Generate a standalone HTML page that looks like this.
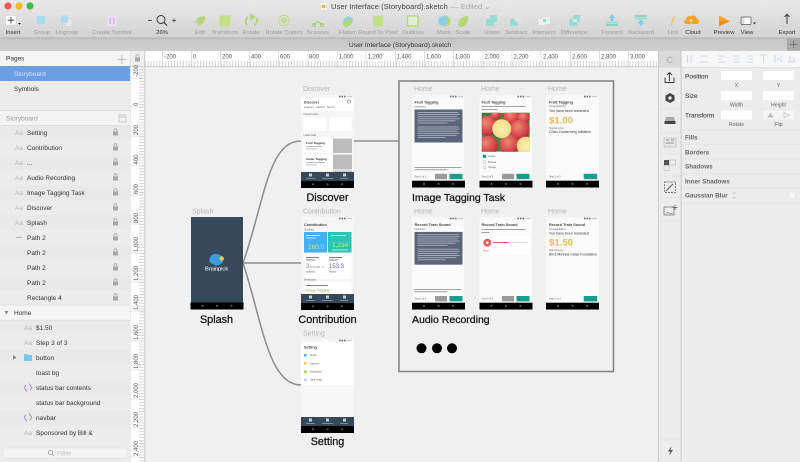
<!DOCTYPE html>
<html><head><meta charset="utf-8"><title>User Interface (Storyboard).sketch</title>
<style>
html,body{margin:0;padding:0;background:#f0f0f0;width:800px;height:462px;overflow:hidden}
svg{display:block;font-family:"Liberation Sans",sans-serif}
.tb{font-size:5.9px;text-anchor:middle;fill:#9a9a9a}
.tb2{font-size:5.9px;text-anchor:middle;fill:#333}
.rl{font-size:6px;fill:#555}
.row{font-size:6.5px;fill:#333}
.aa{font-size:6.5px;fill:#b5b5b5}
.lab{font-size:7px;fill:#b5b5b5}
.big{font-size:10.800px;fill:#111;stroke:#111;stroke-width:.25px}
.ttl{font-size:3.8px;font-weight:bold;fill:#444}
.tiny{font-size:2.4px;fill:#666}
.ins{font-size:6.3px;font-weight:bold;fill:#666}
.insr{font-size:6.5px;fill:#444;stroke:#444;stroke-width:.12px}
.ins0{font-size:5.2px;fill:#666;text-anchor:middle}
</style></head><body>
<svg width="800" height="462" viewBox="0 0 800 462" xmlns="http://www.w3.org/2000/svg">
<defs>
<linearGradient id="tbg" x1="0" y1="0" x2="0" y2="1"><stop offset="0" stop-color="#e9e9e9"/><stop offset="1" stop-color="#d2d2d2"/></linearGradient>
<linearGradient id="tab" x1="0" y1="0" x2="0" y2="1"><stop offset="0" stop-color="#c2c2c2"/><stop offset="1" stop-color="#cfcfcf"/></linearGradient>
<radialGradient id="app1" cx=".4" cy=".35" r=".7"><stop offset="0" stop-color="#ee8a70"/><stop offset=".7" stop-color="#d5404a"/><stop offset="1" stop-color="#a8253a"/></radialGradient>
<radialGradient id="app2" cx=".5" cy=".5" r=".6"><stop offset="0" stop-color="#fbf0b0"/><stop offset=".8" stop-color="#f2dd8a"/><stop offset="1" stop-color="#c94a40"/></radialGradient>
<pattern id="ticksH" x="162.4" y="0" width="2.92" height="6" patternUnits="userSpaceOnUse"><rect width=".7" height="6" fill="#c4c4c4"/></pattern>
<pattern id="ticksV" x="0" y="78" width="6" height="2.92" patternUnits="userSpaceOnUse"><rect width="6" height=".7" fill="#c4c4c4"/></pattern>
<symbol id="lock" viewBox="0 0 7 8" width="7" height="8"><rect x="1" y="3.5" width="5" height="4" fill="#a8a8a8"/><path d="M2 3.5V2.2a1.5 1.5 0 0 1 3 0V3.5" fill="none" stroke="#a8a8a8" stroke-width=".8"/></symbol>
<symbol id="nav" viewBox="0 0 53 7" width="53" height="7"><rect width="53" height="7" fill="#000"/><circle cx="12" cy="3.3" r="1.1" fill="#556"/><circle cx="26.5" cy="3.3" r="1.1" fill="#556"/><circle cx="41" cy="3.3" r="1.1" fill="#556"/></symbol>
<symbol id="status" viewBox="0 0 53 3" width="53" height="3"><rect width="53" height="3" fill="#f6f6f6"/><rect x="38" y=".7" width="1.5" height="1.6" fill="#666"/><rect x="40.5" y=".7" width="1.5" height="1.6" fill="#666"/><rect x="43" y=".7" width="1.5" height="1.6" fill="#666"/><rect x="46" y=".9" width="5" height="1.2" fill="#ccc"/></symbol>
<symbol id="tabs" viewBox="0 0 53 9" width="53" height="9"><rect width="53" height="9" fill="#35495a"/><rect x="8" y="1.5" width="3" height="3" fill="#c7ced4"/><rect x="25" y="1.5" width="3" height="3" fill="#c7ced4"/><rect x="42" y="1.5" width="3" height="3" fill="#c7ced4"/><rect x="5" y="6" width="9" height=".8" fill="#8d9aa5"/><rect x="21" y="6" width="11" height=".8" fill="#8d9aa5"/><rect x="39" y="6" width="8" height=".8" fill="#8d9aa5"/></symbol>
<symbol id="loremBox" viewBox="0 0 48 33" width="48" height="33"><rect width="48" height="33" fill="#5a657b"/><g fill="#aab1bf"><rect x="3" y="2.5" width="41" height=".9"/><rect x="3" y="4.6" width="42" height=".9"/><rect x="3" y="6.7" width="40" height=".9"/><rect x="3" y="8.8" width="42" height=".9"/><rect x="3" y="10.9" width="38" height=".9"/><rect x="3" y="13" width="30" height=".9"/><rect x="3" y="17" width="41" height=".9"/><rect x="3" y="19.1" width="42" height=".9"/><rect x="3" y="21.2" width="40" height=".9"/><rect x="3" y="23.3" width="42" height=".9"/><rect x="3" y="25.4" width="39" height=".9"/><rect x="3" y="27.5" width="28" height=".9"/></g></symbol>
</defs>

<!-- canvas -->
<rect width="800" height="462" fill="#f0f0f0"/>

<!-- toolbar -->
<rect width="800" height="38" fill="url(#tbg)"/>
<rect y="38" width="800" height="13" fill="url(#tab)"/>
<rect y="37.5" width="800" height=".8" fill="#b0b0b0"/>
<rect x="787" y="38.5" width="13" height="12" fill="#a9a9a9"/>
<path d="M793.5 41v7M790 44.500h7" stroke="#777" stroke-width=".9"/>
<circle cx="8" cy="6" r="3.6" fill="#ec5b55"/><circle cx="19" cy="6" r="3.6" fill="#f4b62f"/><circle cx="30" cy="6" r="3.6" fill="#3cc04a"/>
<rect x="320.500" y="2.500" width="6" height="7.500" fill="#fff" stroke="#ccc" stroke-width=".4"/><circle cx="323.500" cy="6.500" r="2" fill="#f0b030"/>
<text x="331" y="9" font-size="7.650" fill="#444">User Interface (Storyboard).sketch</text>
<text x="451" y="9" font-size="7.650" fill="#aaa">— Edited ⌄</text>
<text x="400" y="47" font-size="6.700" fill="#333" text-anchor="middle">User Interface (Storyboard).sketch</text>

<!-- toolbar icons -->
<rect x="6" y="15.500" width="10" height="9.500" rx="1" fill="#fff" stroke="#ccc" stroke-width=".4"/><path d="M11 17v6.500M7.700 20.200h6.600" stroke="#333" stroke-width=".8"/><path d="M18 23h3l-1.500 1.800z" fill="#222"/>
<rect x="39" y="18" width="8" height="8" fill="#ddd"/><rect x="37" y="16" width="8" height="8" fill="#a9dcf0"/>
<rect x="65" y="19" width="7" height="7" fill="#e8e8e8" stroke="#ccc" stroke-width=".4"/><rect x="61" y="15.500" width="7" height="7" fill="#a9dcf0"/>
<rect x="107" y="16" width="10" height="10" rx="1" fill="#ece0f2"/><path d="M110 18v6M114 18v6" stroke="#c49ad8" stroke-width="1"/>
<path d="M148 20.500h4M172 20.500h4M174 18.500v4" stroke="#555" stroke-width=".9"/>
<circle cx="161" cy="19.500" r="4" fill="none" stroke="#333" stroke-width=".9"/><path d="M164 22.500l3 3" stroke="#333" stroke-width="1.200"/>
<path d="M195 24c0-6 6-8 10-8 1 5-3 10-8 10z" fill="#b4d679"/><circle cx="196.500" cy="24" r="1.600" fill="#d8d8d8"/>
<rect x="219.500" y="15.500" width="11" height="11" fill="#c1e088"/>
<path d="M248 17a5.500 5.500 0 0 0-1 8M254 25a5.500 5.500 0 0 0 3-7M251 15l3 2-3 2z" fill="none" stroke="#b4d679" stroke-width="2"/>
<circle cx="284" cy="20.500" r="3" fill="#c1e088"/><circle cx="284" cy="20.500" r="5.200" fill="none" stroke="#b4d679" stroke-width="1.200" stroke-dasharray="1.500 1"/>
<path d="M314 25l4-4 4 4" fill="none" stroke="#a7c96e" stroke-width=".9"/><circle cx="314" cy="25" r="1.500" fill="none" stroke="#a7c96e"/><circle cx="322" cy="25" r="1.500" fill="none" stroke="#a7c96e"/>
<rect x="343" y="17" width="10" height="8" rx="4" transform="rotate(-35 348 21)" fill="#8fd4d8"/><rect x="343" y="20" width="9" height="6" rx="3" transform="rotate(-35 348 23)" fill="#b4d679"/>
<rect x="373" y="15.500" width="10" height="11" fill="#c1e088"/>
<rect x="407.500" y="16" width="10.500" height="10" fill="#e4eed2" stroke="#b4d679" stroke-width="1.300"/>
<circle cx="445" cy="21" r="5.500" fill="#b4d679"/><circle cx="443" cy="21" r="5" fill="#8fd0e8"/>
<path d="M458 25c0-6 5-9 10-9 1 5-2 11-7 11-2 0-3-1-3-2z" fill="#b4d679"/>
<path d="M486 19h4v-4h7v7h-3v4h-8z" fill="#96dcd2"/>
<rect x="515" y="15.500" width="6" height="6" fill="#e3e3e3"/><path d="M510 19h5v2.500h2.500V26h-7.500z" fill="#96dcd2"/>
<rect x="543" y="17" width="7" height="7" fill="#eee"/><rect x="538.500" y="19" width="7" height="6" fill="#eee"/><rect x="543" y="19" width="3" height="3" fill="#96dcd2"/>
<path d="M569 19h4v-4h7v7h-3v4h-8z" fill="#96dcd2"/><rect x="573" y="19" width="4" height="3" fill="#e3e3e3"/>
<path d="M612 14l3 4h-1.500v3h-3v-3H609z" fill="#87ccdd"/><rect x="606" y="21.500" width="12" height="2" fill="#96dcd2"/><rect x="606" y="24" width="12" height="2" fill="#8ed2c8"/>
<rect x="635" y="15" width="12" height="2" fill="#8ed2c8"/><rect x="635" y="17.500" width="12" height="2" fill="#96dcd2"/><path d="M641 26l-3-4h1.500v-2h3v2h1.500z" fill="#87ccdd"/>
<path d="M671 25l3.500-9" stroke="#eec46e" stroke-width="1.300"/>
<path d="M686 24c-2 0-2.500-4 0-4.500 0-3 3-4 4.500-3 2-2 6-1 6 2 3 0 3.500 5.500.5 5.500z" fill="#f2a324"/><path d="M691 24v-4M689.500 21l1.500-1.500 1.500 1.500" stroke="#fff" stroke-width=".6" fill="none"/>
<path d="M719 15.500l11 5.500-11 5.500z" fill="#f6a623"/><path d="M719 21l11 0-11 5.500z" fill="#ef8a1e"/>
<rect x="741" y="17" width="10" height="7.500" rx="1" fill="#fff" stroke="#555" stroke-width=".7"/><rect x="741.500" y="17.500" width="3" height="6.500" fill="#ddd"/><path d="M753 22.500h3l-1.500 1.800z" fill="#222"/>
<path d="M787 24v-9.500M784.500 17l2.500-2.800 2.500 2.800" fill="none" stroke="#222" stroke-width=".9"/><path d="M782.500 20v6h9v-6" fill="none" stroke="#ccc" stroke-width=".5"/>

<!-- toolbar labels -->
<text class="tb2" x="13" y="34">Insert</text>
<text class="tb" x="42" y="34">Group</text><text class="tb" x="67" y="34">Ungroup</text><text class="tb" x="112" y="34">Create Symbol</text>
<text class="tb2" x="162" y="34">26%</text>
<text class="tb" x="200" y="34">Edit</text><text class="tb" x="225" y="34">Transform</text><text class="tb" x="251" y="34">Rotate</text><text class="tb" x="284" y="34">Rotate Copies</text><text class="tb" x="318" y="34">Scissors</text><text class="tb" x="348" y="34">Flatten</text><text class="tb" x="378" y="34">Round To Pixel</text><text class="tb" x="413" y="34">Outlines</text><text class="tb" x="444" y="34">Mask</text><text class="tb" x="463" y="34">Scale</text><text class="tb" x="492" y="34">Union</text><text class="tb" x="516" y="34">Subtract</text><text class="tb" x="544" y="34">Intersect</text><text class="tb" x="574" y="34">Difference</text><text class="tb" x="612" y="34">Forward</text><text class="tb" x="641" y="34">Backward</text><text class="tb" x="673" y="34">Link</text>
<text class="tb2" x="693" y="34">Cloud</text><text class="tb2" x="724" y="34">Preview</text><text class="tb2" x="747" y="34">View</text><text class="tb2" x="787" y="34">Export</text>

<!-- horizontal ruler -->
<rect x="130" y="51" width="528" height="16" fill="#fff"/>
<rect x="130" y="51" width="15" height="16" fill="#eeeeee"/>
<rect x="145" y="61" width="513" height="6" fill="url(#ticksH)"/>
<path d="M162.500 51v16M191.500 51v16M220.500 51v16M249.500 51v16M278.500 51v16M308 51v16M337 51v16M366 51v16M395.500 51v16M424.500 51v16M453.500 51v16M483 51v16M512 51v16M541 51v16M570.500 51v16M599.500 51v16M628.500 51v16" stroke="#ccc" stroke-width=".6"/>
<text class="rl" x="164" y="58.500">-200</text><text class="rl" x="193" y="58.500">0</text><text class="rl" x="222" y="58.500">200</text><text class="rl" x="251" y="58.500">400</text><text class="rl" x="280" y="58.500">600</text><text class="rl" x="309" y="58.500">800</text><text class="rl" x="338.500" y="58.500">1,000</text><text class="rl" x="367.500" y="58.500">1,200</text><text class="rl" x="396.500" y="58.500">1,400</text><text class="rl" x="426" y="58.500">1,600</text><text class="rl" x="455" y="58.500">1,800</text><text class="rl" x="484.500" y="58.500">2,000</text><text class="rl" x="513.500" y="58.500">2,200</text><text class="rl" x="543" y="58.500">2,400</text><text class="rl" x="572" y="58.500">2,600</text><text class="rl" x="601" y="58.500">2,800</text><text class="rl" x="630" y="58.500">3,000</text>
<rect x="130" y="66.500" width="528" height=".6" fill="#bbb"/>

<!-- vertical ruler -->
<rect x="130" y="67" width="15" height="395" fill="#fff"/>
<rect x="139" y="67" width="6" height="395" fill="url(#ticksV)"/>
<path d="M130 78h15M130 107h15M130 136h15M130 165.500h15M130 195h15M130 224h15M130 253h15M130 282h15M130 311h15M130 341h15M130 370h15M130 399h15M130 428h15M130 457h15" stroke="#ccc" stroke-width=".6"/>
<rect x="144.500" y="51" width=".7" height="411" fill="#bbb"/><rect x="129.500" y="51" width=".8" height="411" fill="#bbb"/>
<use href="#lock" x="134" y="54"/>
<text class="rl" transform="translate(138,77) rotate(-90)">-200</text>
<text class="rl" transform="translate(138,106) rotate(-90)">0</text>
<text class="rl" transform="translate(138,135) rotate(-90)">200</text>
<text class="rl" transform="translate(138,164.500) rotate(-90)">400</text>
<text class="rl" transform="translate(138,194) rotate(-90)">600</text>
<text class="rl" transform="translate(138,223) rotate(-90)">800</text>
<text class="rl" transform="translate(138,252) rotate(-90)">1,000</text>
<text class="rl" transform="translate(138,281) rotate(-90)">1,200</text>
<text class="rl" transform="translate(138,310) rotate(-90)">1,400</text>
<text class="rl" transform="translate(138,340) rotate(-90)">1,600</text>
<text class="rl" transform="translate(138,369) rotate(-90)">1,800</text>
<text class="rl" transform="translate(138,398) rotate(-90)">2,000</text>
<text class="rl" transform="translate(138,427) rotate(-90)">2,200</text>
<text class="rl" transform="translate(138,456) rotate(-90)">2,400</text>

<!-- left sidebar -->
<rect x="0" y="51" width="130" height="411" fill="#ececec"/>
<rect x="0" y="51" width="130" height="15" fill="#f5f5f5"/>
<text class="row" x="6" y="60.500">Pages</text>
<path d="M122 55v9M117.500 59.500h9" stroke="#aaa" stroke-width=".8"/>
<rect x="0" y="66" width="130" height="15" fill="#6a9fe6"/>
<text x="14" y="76" font-size="6.500" fill="#d8e6fa">Storyboard</text>
<text class="row" x="14" y="91">Symbols</text>
<rect x="0" y="110.500" width="130" height=".8" fill="#d0d0d0"/>
<rect x="0" y="111" width="130" height="14" fill="#f3f3f3"/>
<text x="6" y="120.500" font-size="6.500" fill="#999">Storyboard</text>
<rect x="119" y="115" width="7" height="7" fill="none" stroke="#aaa" stroke-width=".6"/><path d="M120 117h5" stroke="#aaa" stroke-width=".6"/>
<rect x="0" y="125" width="130" height=".6" fill="#d8d8d8"/>
<rect y="125.500" width="130" height="15" fill="#e9e9e9"/><rect y="155.500" width="130" height="15" fill="#e9e9e9"/><rect y="185.500" width="130" height="15" fill="#e9e9e9"/><rect y="215" width="130" height="15" fill="#e9e9e9"/><rect y="245" width="130" height="15" fill="#e9e9e9"/><rect y="275" width="130" height="15" fill="#e9e9e9"/>
<rect y="320" width="130" height="15" fill="#e9e9e9"/><rect y="350" width="130" height="15" fill="#e9e9e9"/><rect y="380" width="130" height="15" fill="#e9e9e9"/><rect y="410" width="130" height="15" fill="#e9e9e9"/>
<text class="aa" x="15" y="135.200">Aa</text><text class="row" x="27" y="135.200">Setting</text><use href="#lock" x="112" y="128"/>
<text class="aa" x="15" y="150.200">Aa</text><text class="row" x="27" y="150.200">Contribution</text><use href="#lock" x="112" y="143"/>
<text class="aa" x="15" y="165.200">Aa</text><text class="row" x="27" y="165.200">...</text><use href="#lock" x="112" y="158"/>
<text class="aa" x="15" y="180.200">Aa</text><text class="row" x="27" y="180.200">Audio Recording</text><use href="#lock" x="112" y="173"/>
<text class="aa" x="15" y="195.200">Aa</text><text class="row" x="27" y="195.200">Image Tagging Task</text><use href="#lock" x="112" y="188"/>
<text class="aa" x="15" y="210">Aa</text><text class="row" x="27" y="210">Discover</text><use href="#lock" x="112" y="203"/>
<text class="aa" x="15" y="225">Aa</text><text class="row" x="27" y="225">Splash</text><use href="#lock" x="112" y="218"/>
<path d="M16 237.500h6" stroke="#aaa" stroke-width=".8"/><text class="row" x="27" y="240">Path 2</text><use href="#lock" x="112" y="233"/>
<text class="row" x="27" y="255">Path 2</text><use href="#lock" x="112" y="248"/>
<text class="row" x="27" y="270">Path 2</text><use href="#lock" x="112" y="263"/>
<text class="row" x="27" y="285">Path 2</text><use href="#lock" x="112" y="278"/>
<text class="row" x="27" y="300">Rectangle 4</text><use href="#lock" x="112" y="293"/>
<rect y="305" width="130" height="15" fill="#f5f5f5"/><rect y="304.700" width="130" height=".6" fill="#d4d4d4"/><rect y="319.800" width="130" height=".6" fill="#dadada"/>
<path d="M4.500 311h4l-2 3.500z" fill="#888"/>
<text class="row" x="14" y="315">Home</text>
<text class="aa" x="24" y="330">Aa</text><text class="row" x="36" y="330">$1.50</text>
<text class="aa" x="24" y="345">Aa</text><text class="row" x="36" y="345">Step 3 of 3</text>
<path d="M13 355l3.500 2.500-3.500 2.500z" fill="#888"/>
<path d="M24 354h3l1 1h4v6h-8z" fill="#7cc4ee"/><text class="row" x="36" y="360">button</text>
<text class="row" x="36" y="375">toast bg</text>
<path d="M26 385a3 3 0 0 0 0 5l1 1.500M30 390a3 3 0 0 0 0-5l-1-1.500" fill="none" stroke="#a77fd0" stroke-width=".9"/><text class="row" x="36" y="390">status bar contents</text>
<text class="row" x="36" y="405">status bar background</text>
<path d="M26 415a3 3 0 0 0 0 5l1 1.500M30 420a3 3 0 0 0 0-5l-1-1.500" fill="none" stroke="#a77fd0" stroke-width=".9"/><text class="row" x="36" y="420">navbar</text>
<text class="aa" x="24" y="435">Aa</text><text class="row" x="36" y="435">Sponsored by Bill &amp;</text>
<rect y="441" width="130" height="21" fill="#ececec"/>
<rect x="3" y="448" width="124" height="10" rx="2" fill="#f5f5f5" stroke="#ddd" stroke-width=".5"/>
<circle cx="50.500" cy="452.500" r="2.200" fill="none" stroke="#888" stroke-width=".7"/><path d="M52 454l2 2" stroke="#888" stroke-width=".7"/>
<text x="57" y="455.500" font-size="6.500" fill="#bbb">Filter</text>

<!-- connectors -->
<g fill="none" stroke="#8c8c8c" stroke-width="1.500">
<path d="M243 263h58"/>
<path d="M243 263C265 200 268 141 301 141"/>
<path d="M243 263C262 320 268 385 301 385"/>
<path d="M354 141h44"/>
</g>
<rect x="399" y="81" width="214.500" height="290.500" fill="none" stroke="#7f7f7f" stroke-width="1.500"/>
<circle cx="421.500" cy="348.300" r="5" fill="#000"/><circle cx="437" cy="348.300" r="5" fill="#000"/><circle cx="452" cy="348.300" r="5" fill="#000"/>

<!-- artboard labels -->
<text class="lab" x="192" y="213.500">Splash</text>
<text class="lab" x="303" y="91">Discover</text>
<text class="lab" x="303" y="213.500">Contribution</text>
<text class="lab" x="303" y="335.500">Setting</text>
<text class="lab" x="414" y="91">Home</text><text class="lab" x="481" y="91">Home</text><text class="lab" x="548" y="91">Home</text>
<text class="lab" x="414" y="213.500">Home</text><text class="lab" x="481" y="213.500">Home</text><text class="lab" x="548" y="213.500">Home</text>
<text class="big" x="216.500" y="323" text-anchor="middle">Splash</text>
<text class="big" x="327.500" y="201" text-anchor="middle">Discover</text>
<text class="big" x="327.500" y="323" text-anchor="middle">Contribution</text>
<text class="big" x="327.500" y="445" text-anchor="middle">Setting</text>
<text class="big" x="412" y="201" style="font-size:10.500px">Image Tagging Task</text>
<text class="big" x="412" y="323" style="font-size:10.500px">Audio Recording</text>

<!-- Splash -->
<rect x="191" y="217" width="52" height="92" fill="#35495a"/>
<path d="M221 264c-3 2-6 2-7 .5-3.500-.5-5-3-4.500-5.500 .5-3.500 4-5.500 7.500-5 3 .3 6 2.500 6.500 5.500 0 2-1.500 3.500-2.500 4.500z" fill="#3a9be0"/>
<circle cx="221.700" cy="258.500" r="2.200" fill="#e6cf38"/>
<text x="216.500" y="270.500" font-size="5.600" fill="#e8ecef" stroke="#e8ecef" stroke-width=".1" text-anchor="middle">Brainpick</text>
<use href="#nav" x="190.500" y="302.500"/>

<!-- Discover -->
<rect x="301" y="95" width="53" height="92" fill="#f6f6f6"/>
<use href="#status" x="301" y="95"/>
<rect x="301" y="98" width="53" height="13" fill="#fff"/>
<text class="ttl" x="304" y="103.500" style="font-size:3.600px">Discover</text><circle cx="349" cy="101.500" r="1.600" fill="none" stroke="#778" stroke-width=".6"/>
<text class="tiny" x="304" y="108">Featured</text><text class="tiny" x="316" y="108">Catchup</text><text class="tiny" x="327" y="108">Recent</text>
<text class="tiny" x="303.500" y="115">Popular tasks</text>
<rect x="303" y="117" width="24" height="14.500" fill="#fff" stroke="#e4e4e4" stroke-width=".3"/><rect x="328.500" y="117" width="23.500" height="14.500" fill="#fff" stroke="#e4e4e4" stroke-width=".3"/>
<text class="tiny" x="303.500" y="136">Latest tasks</text>
<rect x="303" y="137.500" width="49" height="15.500" fill="#fff"/><rect x="333" y="138.500" width="19" height="14.500" fill="#bcbcbc"/>
<text x="306" y="144" font-size="3" font-weight="bold" fill="#333">Fruit Tagging</text><rect x="306" y="146" width="16" height=".8" fill="#aaa"/><rect x="306" y="148.500" width="11" height=".8" fill="#aaa"/>
<rect x="303" y="154" width="49" height="16" fill="#fff"/><rect x="333" y="154.500" width="19" height="15" fill="#bcbcbc"/>
<text x="306" y="160" font-size="3" font-weight="bold" fill="#333">Audio Tagging</text><rect x="306" y="162" width="19" height=".8" fill="#aaa"/><rect x="306" y="164.500" width="11" height=".8" fill="#aaa"/>
<rect x="333" y="170.500" width="19" height="1.500" fill="#c4c4c4"/>
<use href="#tabs" x="301" y="172"/><use href="#nav" x="301" y="181"/>

<!-- Contribution -->
<rect x="301" y="217" width="53" height="92" fill="#f6f6f6"/>
<use href="#status" x="301" y="217"/>
<text class="ttl" x="304" y="226">Contribution</text>
<text class="tiny" x="304" y="230.500">Summary</text>
<rect x="304" y="232" width="23" height="20.500" fill="#46aef3"/>
<rect x="328" y="232" width="23.500" height="20.500" fill="#2cc4b4"/>
<rect x="306" y="235" width="14" height=".9" fill="#cfe9fb"/><rect x="306" y="237.500" width="10" height=".9" fill="#cfe9fb"/>
<text x="308" y="249" font-size="6.500" fill="#c0ee7c">160.0</text>
<rect x="331" y="235" width="15" height=".9" fill="#bff0e9"/>
<text x="332" y="247" font-size="6.500" fill="#c9f55a">1,234</text>
<rect x="332" y="249.500" width="16" height=".9" fill="#bff0e9"/>
<rect x="304" y="254" width="47.500" height="25" fill="#fff"/>
<rect x="306" y="257" width="13" height=".9" fill="#777"/><rect x="306" y="259.500" width="9" height=".9" fill="#777"/>
<text x="306" y="268" font-size="6" fill="#7a7fb0">3</text><text x="310" y="268" font-size="4" fill="#8a8fb8">hours</text>
<text x="322" y="268" font-size="4.500" fill="#888">=</text>
<rect x="329" y="257" width="13" height=".9" fill="#777"/><rect x="329" y="259.500" width="9" height=".9" fill="#777"/>
<text x="329" y="268" font-size="6" fill="#6f5fb0">153.3</text>
<rect x="306" y="271.500" width="9" height=".8" fill="#888"/><rect x="329" y="271.500" width="7" height=".8" fill="#888"/>
<text class="tiny" x="304" y="280.500">Breakdown</text>
<rect x="304" y="282" width="47.500" height="12" fill="#fff"/>
<rect x="306" y="285" width="22" height=".9" fill="#777"/>
<text x="306" y="291.500" font-size="3.600" fill="#7fb53e">Image Tagging</text>
<use href="#tabs" x="301" y="294"/><use href="#nav" x="301" y="303"/>

<!-- Setting -->
<rect x="301" y="339" width="53" height="93" fill="#f6f6f6"/>
<use href="#status" x="301" y="339"/>
<rect x="301" y="342" width="53" height="43" fill="#fff"/>
<text class="ttl" x="304" y="348.500">Setting</text>
<rect x="304" y="354" width="2.600" height="2.600" fill="#58aef0"/><text class="tiny" x="310" y="356">Profile</text>
<rect x="304" y="362" width="2.600" height="2.600" fill="#f3c66b"/><text class="tiny" x="310" y="364.500">Payment</text>
<rect x="304" y="370.500" width="2.600" height="2.600" fill="#9ccf4d"/><text class="tiny" x="310" y="372.500">Notification</text>
<rect x="304" y="378.500" width="2.600" height="2.600" fill="#d2c4e4"/><text class="tiny" x="310" y="380.500">Data usage</text>
<use href="#tabs" x="301" y="417"/><use href="#nav" x="301" y="426"/>

<!-- Fruit tagging 1 -->
<rect x="412" y="95" width="52" height="92" fill="#fafafa"/><use href="#status" x="412" y="95"/>
<text class="ttl" x="414.500" y="103.500">Fruit Tagging</text><text class="tiny" x="414.500" y="107.500">Instruction</text>
<use href="#loremBox" x="414.500" y="109.500"/>
<rect x="414.500" y="167" width="47" height=".9" fill="#999"/><rect x="414.500" y="169.300" width="33" height=".9" fill="#999"/>
<text class="tiny" x="414.500" y="177.500">Step 1 of 3</text>
<rect x="435" y="173.800" width="12" height="5.400" fill="#9a9a9a"/><rect x="449.500" y="173.800" width="13" height="5.400" fill="#1b9d8b"/>
<use href="#nav" x="412" y="180.600"/>

<!-- Fruit tagging 2 -->
<rect x="479.500" y="95" width="52.500" height="92" fill="#fafafa"/><use href="#status" x="479.500" y="95"/>
<text class="ttl" x="481.500" y="103.500">Fruit Tagging</text>
<rect x="481.500" y="106" width="44" height=".9" fill="#999"/><rect x="481.500" y="109" width="16" height=".9" fill="#999"/>
<svg x="481.700" y="112.700" width="48" height="39" viewBox="0 0 48 39">
<rect width="48" height="39" fill="#5a7a3a"/>
<path d="M0 0h18l-6 8-12 4zM30 0h18v6l-10-1z" fill="#3f7d33"/>
<circle cx="6" cy="13" r="10" fill="url(#app1)"/><circle cx="30" cy="4" r="8" fill="url(#app1)"/><circle cx="42" cy="5" r="6" fill="url(#app1)"/><circle cx="38" cy="17" r="10" fill="url(#app1)"/><circle cx="6" cy="33" r="10" fill="url(#app1)"/><circle cx="28" cy="32" r="10" fill="url(#app1)"/><circle cx="44" cy="33" r="9" fill="url(#app2)"/><circle cx="20" cy="16" r="9.500" fill="url(#app2)"/><circle cx="14" cy="2" r="5" fill="url(#app1)"/>
</svg>
<circle cx="484.500" cy="156.300" r="1.800" fill="#1b9d8b"/><circle cx="484.500" cy="162" r="1.500" fill="#fff" stroke="#999" stroke-width=".4"/><circle cx="484.500" cy="167.300" r="1.500" fill="#fff" stroke="#999" stroke-width=".4"/>
<text class="tiny" x="488" y="157">Apples</text><text class="tiny" x="488" y="162.800">Banana</text><text class="tiny" x="488" y="168">Orange</text>
<text class="tiny" x="481.500" y="177.500">Step 2 of 3</text>
<rect x="502" y="173.800" width="12" height="5.400" fill="#9a9a9a"/><rect x="516.500" y="173.800" width="13" height="5.400" fill="#1b9d8b"/>
<use href="#nav" x="479.500" y="180.600"/>

<!-- Fruit tagging 3 -->
<rect x="546" y="95" width="53" height="92" fill="#fafafa"/><use href="#status" x="546" y="95"/>
<text class="ttl" x="549" y="103.500">Fruit Tagging</text><text class="tiny" x="549" y="107">Congratulations</text>
<text x="549" y="112" font-size="3.600" fill="#333">You have been rewarded</text>
<text x="549" y="123.500" font-size="9.600" font-weight="bold" fill="#f2b85a">$1.00</text>
<text class="tiny" x="549" y="129">Sponsored by</text>
<text x="549" y="133" font-size="3.600" fill="#333">Chan Zuckerberg Initiative</text>
<text class="tiny" x="549" y="177.500">Step 3 of 3</text>
<rect x="583.700" y="173.800" width="13.500" height="5.400" fill="#1b9d8b"/>
<use href="#nav" x="546" y="180.600"/>

<!-- Record 1 -->
<rect x="412" y="217" width="52" height="92" fill="#fafafa"/><use href="#status" x="412" y="217"/>
<text class="ttl" x="414.500" y="226">Record Train Sound</text><text class="tiny" x="414.500" y="230">Instruction</text>
<use href="#loremBox" x="414.500" y="231.800"/>
<rect x="414.500" y="289" width="47" height=".9" fill="#999"/><rect x="414.500" y="291.300" width="33" height=".9" fill="#999"/>
<text class="tiny" x="414.500" y="299.500">Step 1 of 3</text>
<rect x="435" y="296" width="12" height="5.400" fill="#9a9a9a"/><rect x="449.500" y="296" width="13" height="5.400" fill="#1b9d8b"/>
<use href="#nav" x="412" y="302.600"/>

<!-- Record 2 -->
<rect x="479.500" y="217" width="52.500" height="92" fill="#fafafa"/><use href="#status" x="479.500" y="217"/>
<text class="ttl" x="481.500" y="226">Record Train Sound</text>
<rect x="481.500" y="229" width="44" height=".9" fill="#999"/><rect x="481.500" y="232" width="8" height=".9" fill="#999"/>
<rect x="481.500" y="236" width="48" height="18" fill="#fff"/>
<circle cx="487.300" cy="242.700" r="4" fill="#ee5a64"/><circle cx="487.300" cy="242.700" r="1.300" fill="#fff"/>
<rect x="493" y="242" width="34" height="1" fill="#ddd"/><rect x="493" y="242" width="15" height="1" fill="#ee5a64"/>
<text class="tiny" x="483" y="251.500" style="fill:#ee5a64">Retry</text>
<text class="tiny" x="481.500" y="299.500">Step 2 of 3</text>
<rect x="502" y="296" width="12" height="5.400" fill="#9a9a9a"/><rect x="516.500" y="296" width="13" height="5.400" fill="#1b9d8b"/>
<use href="#nav" x="479.500" y="302.600"/>

<!-- Record 3 -->
<rect x="546" y="217" width="53" height="92" fill="#fafafa"/><use href="#status" x="546" y="217"/>
<text class="ttl" x="549" y="226">Record Train Sound</text><text class="tiny" x="549" y="230">Congratulations</text>
<text x="549" y="234.500" font-size="3.600" fill="#333">You have been rewarded</text>
<text x="549" y="245.500" font-size="9.600" font-weight="bold" fill="#f2b85a">$1.50</text>
<text class="tiny" x="549" y="251">Sponsored by</text>
<text x="549" y="255.300" font-size="3.350" fill="#333">Bill &amp; Melinda Gates Foundation</text>
<text class="tiny" x="549" y="299.500">Step 3 of 3</text>
<rect x="583.700" y="296" width="13.500" height="5.400" fill="#1b9d8b"/>
<use href="#nav" x="546" y="302.600"/>

<!-- right column -->
<rect x="658" y="51" width="142" height="411" fill="#ececec"/>
<rect x="658" y="51" width="23" height="16" fill="#d9d9d9"/>
<text x="669.500" y="63" font-size="9.500" font-weight="bold" fill="#b5b5b5" text-anchor="middle">C</text>
<rect x="681" y="51" width="119" height="16" fill="#f7f7f7"/>
<rect x="658" y="51" width=".8" height="411" fill="#c4c4c4"/><rect x="680.700" y="51" width=".8" height="411" fill="#c4c4c4"/>
<rect x="658" y="67" width="142" height=".6" fill="#d4d4d4"/>
<g stroke="#b4d3ef" stroke-width=".8" fill="none">
<path d="M687.500 55v8M691 55v8M700 56h8M700 62h8"/>
<path d="M718 56h7M718 59h4M718 62h7M733 56h7M734.500 59h4M733 62h7M747 56h6M749 59h4M747 62h6M760 55h7M763.500 55v7M775 55v8M778 57v4M781 56v6M788 62h7M790 56v6M794 58v4"/>
</g>
<!-- tools -->
<g stroke="#dadada" stroke-width=".6"><path d="M659 88h22M659 109h22M659 133h22M659 154h22M659 176h22M659 198h22M659 221h22M659 439h22"/></g>
<path d="M669.500 81v-8M667 75l2.500-2.500 2.500 2.500M665 77.500v5h9v-5" fill="none" stroke="#333" stroke-width=".9"/>
<path d="M670 93l4.500 2.500v5l-4.500 2.500-4.500-2.500v-5z" fill="#444"/><circle cx="670" cy="98" r="1.700" fill="#ececec"/>
<path d="M666 117h8l1 4h-10z" fill="#aaa"/><rect x="664.500" y="121" width="11" height="3" fill="#444"/>
<rect x="664" y="138" width="12" height="9" fill="#e4e4e4" stroke="#aaa" stroke-width=".5"/><path d="M666 140h3M671 140h3M666 143h8" stroke="#999" stroke-width=".9"/>
<rect x="664" y="160" width="5" height="5" fill="#555"/><rect x="669.500" y="160" width="6" height="5" fill="none" stroke="#aaa" stroke-width=".5"/><rect x="664" y="165.500" width="5" height="5" fill="none" stroke="#aaa" stroke-width=".5"/>
<rect x="664.500" y="182" width="11" height="10.500" fill="none" stroke="#555" stroke-width=".7" stroke-dasharray="2 1"/><path d="M666 191l7-7" stroke="#555" stroke-width="1.100"/>
<rect x="664" y="207" width="10" height="8" fill="none" stroke="#555" stroke-width=".6"/><path d="M665.500 214l2-2 2 2 1.500-1 1.500 1" fill="none" stroke="#555" stroke-width=".5"/><path d="M675 205v5M672.500 207.500h5" stroke="#555" stroke-width=".7"/>
<path d="M671.500 446l-3.500 5.500h2.500l-1.500 4.500 4-6h-2.500z" fill="#555"/>

<!-- inspector -->
<text class="insr" x="685" y="78.500">Position</text>
<text class="insr" x="685" y="98">Size</text>
<text class="insr" x="685" y="117.500">Transform</text>
<g fill="#fff"><rect x="721" y="71" width="31" height="9"/><rect x="763" y="71" width="31" height="9"/><rect x="721" y="91" width="31" height="9"/><rect x="763" y="91" width="31" height="9"/><rect x="721" y="110.500" width="31" height="9"/></g>
<rect x="763" y="110.500" width="15" height="9" fill="#f5f5f5"/><rect x="778.500" y="110.500" width="15.500" height="9" fill="#f5f5f5"/>
<path d="M770.500 112.500l-3 5h6z" fill="#bbb"/><path d="M784 112.500l5 2.500-5 3z" fill="none" stroke="#bbb" stroke-width=".6"/>
<text class="ins0" x="736.500" y="87">X</text><text class="ins0" x="778.500" y="87">Y</text>
<text class="ins0" x="736.500" y="106.500">Width</text><text class="ins0" x="778.500" y="106.500">Height</text>
<text class="ins0" x="736.500" y="126">Rotate</text><text class="ins0" x="778.500" y="126">Flip</text>
<g stroke="#dcdcdc" stroke-width=".6"><path d="M681 130h119M681 144.500h119M681 159h119M681 173.500h119M681 188h119M681 203h119"/></g>
<text class="ins" x="685" y="139.500">Fills</text>
<text class="ins" x="685" y="154.500">Borders</text>
<text class="ins" x="685" y="168.500">Shadows</text>
<text class="ins" x="685" y="183.500">Inner Shadows</text>
<text class="ins" x="685" y="197.500">Gaussian Blur</text>
<path d="M733 194l1.300-1.500 1.300 1.500M733 197l1.300 1.500 1.300-1.500" fill="none" stroke="#999" stroke-width=".5"/>
<rect x="789" y="192" width="6.500" height="6.500" rx="1" fill="#f6f6f6" stroke="#ddd" stroke-width=".4"/>
</svg>
</body></html>
